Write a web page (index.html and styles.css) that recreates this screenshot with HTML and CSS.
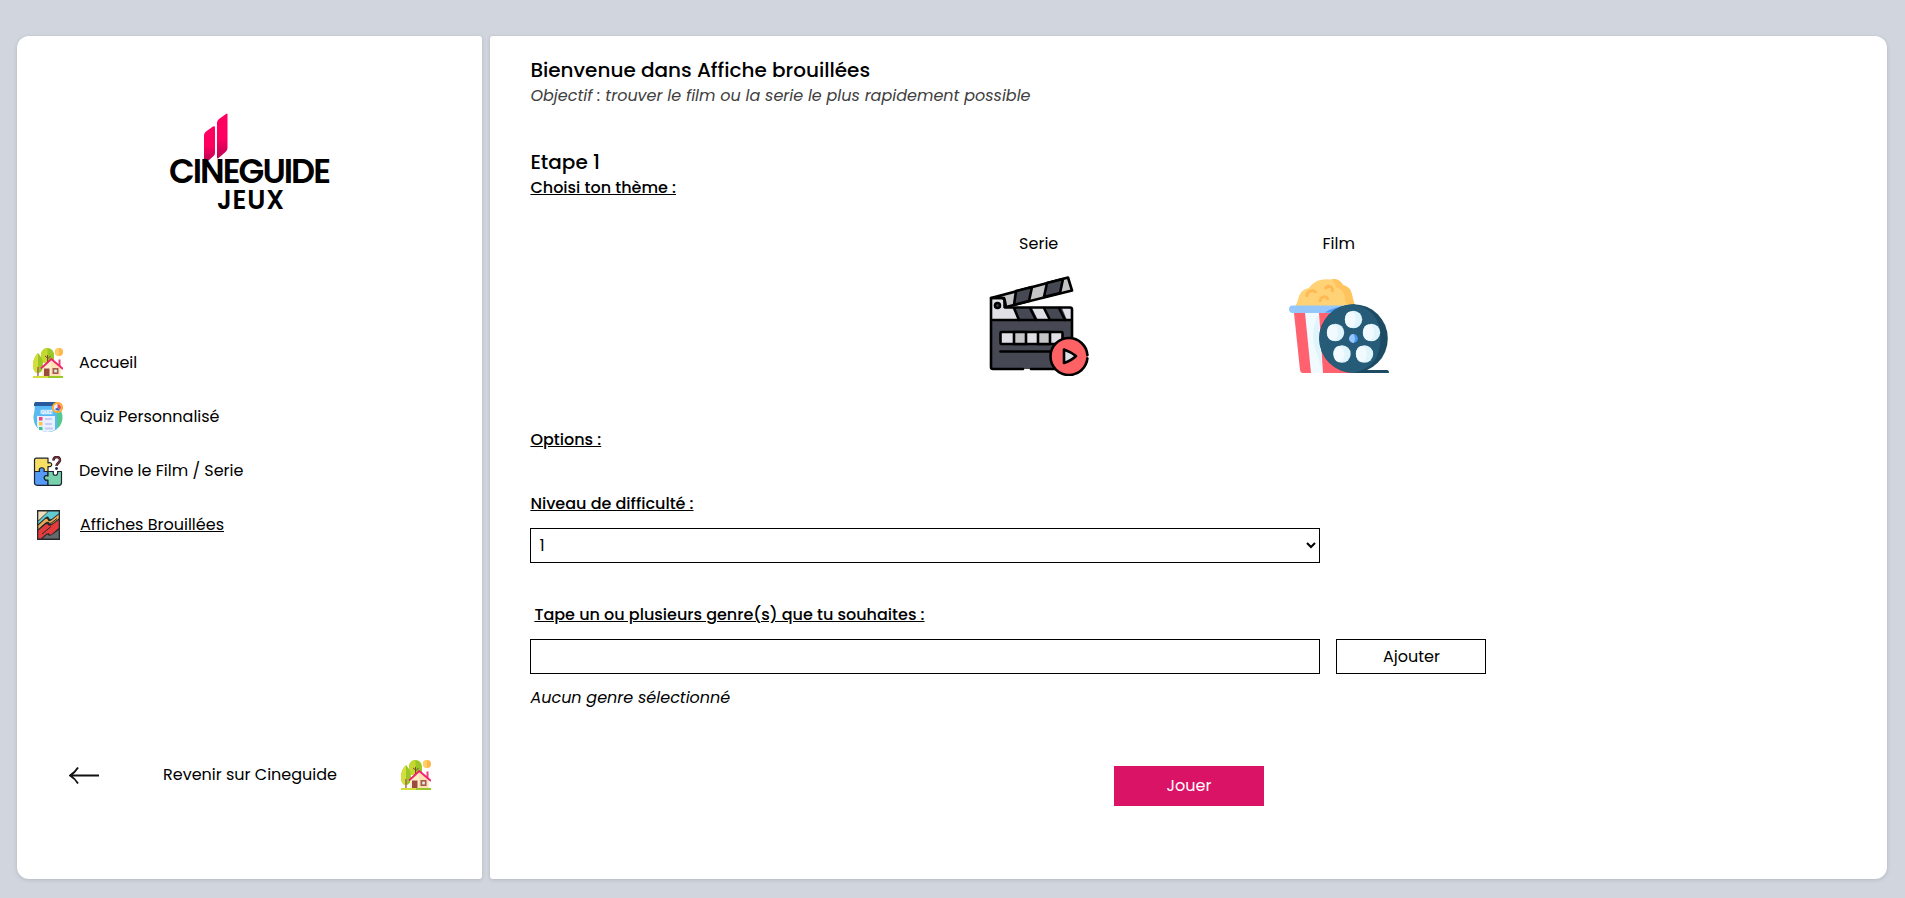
FILE: index.html
```html
<!DOCTYPE html>
<html lang="fr">
<head>
<meta charset="utf-8">
<title>Cineguide Jeux</title>
<link rel="stylesheet" href="styles.css">
</head>
<body>
<svg class="defs" width="0" height="0" aria-hidden="true">
  <symbol id="house" viewBox="0 0 30 30">
    <circle cx="26" cy="4" r="4" fill="#ffb64c"/><path d="M22 4a4 4 0 0 1 4-4v8a4 4 0 0 1-4-4z" fill="#ffd064"/>
    <path d="M8 7C8 3 11 0 14.500 0S21 3 21 7v8H8z" fill="#9bc627"/><path d="M8 7C8 3 11 0 14.500 0v15H8z" fill="#c4d82e"/>
    <path d="M14.500 14V7M14.500 11l3-3M14.500 10l-2.500-2" stroke="#7d4a35" stroke-width="1" fill="none"/>
    <path d="M5 5C2 8 0 12 0 17s2 8 5 8 5-3 5-8S8 8 5 5z" fill="#9bc627"/><path d="M5 5C2 8 0 12 0 17s2 8 5 8z" fill="#d4de3a"/>
    <path d="M4.200 19h1.500v10H4.200z" fill="#a5694f"/>
    <path d="M9 29V19l9-8 9.500 8v10z" fill="#ffeec9"/><path d="M18 11l9.500 8v10H18z" fill="#ffe0b4"/>
    <path d="M25.500 11.500h2v7l-2-2z" fill="#f23f77"/>
    <path d="M8 20.500L18.300 11 30 21" fill="none" stroke="#f2206d" stroke-width="1.800"/>
    <path d="M11 20.500h5.500V29H11z" fill="#9a4b3e"/><rect x="19.500" y="20" width="6" height="6" fill="#a65a48"/><rect x="21.200" y="21.600" width="2.700" height="2.800" fill="#d6edf1"/>
    <path d="M0 28h30v2H0z" fill="#9bc627"/><path d="M0 28h15v2H0z" fill="#d4de3a"/>
  </symbol>
</svg>
<div class="app">
  <aside class="sidebar">
    <svg class="logo" viewBox="0 0 170 120" role="img" aria-label="Cineguide Jeux">
      <defs><linearGradient id="pink" x1="0" y1="0" x2="0" y2="1"><stop offset=".55" stop-color="#ff0060"/><stop offset="1" stop-color="#b90352"/></linearGradient></defs>
      <path d="M38 25q0-2 2-3.500l7-5q2-1 2 1V43q0 2-2 3.500l-5 4.500q-1.500 1-3 0-1-.5-1-2z" fill="url(#pink)"/>
      <path d="M51 12.500q0-2 2-3.500l7-5q1.500-1 1.500.5V38q0 2.500-2 4l-7 6q-1.500 1.500-1.500-1z" fill="url(#pink)"/>
      <text class="logo-name" x="3" y="73" textLength="162" lengthAdjust="spacing">CINEGUIDE</text>
      <text class="logo-sub" x="51" y="99" textLength="67" lengthAdjust="spacing">JEUX</text>
    </svg>
    <nav class="menu">
      <a class="item"><svg class="ico"><use href="#house"/></svg><span>Accueil</span></a>
      <a class="item shifted"><svg class="ico" viewBox="0 0 30 30">
        <circle cx="15" cy="15.500" r="14.500" fill="#54c98f"/><path d="M2 0h22v27q-9 6-18 0-5-4-5-10z" fill="#58b9f4"/><path d="M2 0h22v4H1V2z" fill="#265a9b"/>
        <rect x="7" y="7.500" width="13" height="5" rx="1" fill="#8fcff9"/><text class="quiz" x="8" y="12" textLength="11">QUIZ</text>
        <path d="M4 14h18v14q-8 4-15 0-3-2-3-5z" fill="#eaf0ff"/><path d="M12 17h7M12 22h7M12 26.500h8" stroke="#c4cdf5" stroke-width="1.800"/>
        <rect x="6" y="15" width="3.500" height="3.500" fill="#e8467b"/><rect x="6" y="20" width="3.500" height="3.500" fill="#f6ca43"/><rect x="6" y="25" width="3.500" height="3" fill="#3abf92"/>
        <circle cx="24.500" cy="5.500" r="4.600" fill="#e7efff" stroke="#ffac35" stroke-width="2"/><path d="M24.500 5.500V2a3.500 3.500 0 0 1 2.500 6z" fill="#e74a59"/><path d="M24.500 5.500L27 8a3.500 3.500 0 0 1-5-1z" fill="#3f69bd"/>
      </svg><span>Quiz Personnalisé</span></a>
      <a class="item"><svg class="ico" viewBox="0 0 30 30" fill="none" stroke="#1d2230" stroke-width="1.200" stroke-linejoin="round">
        <path d="M1.500 15.500V4q0-1.800 1.800-1.800H15V7c5-2 5 5 0 3.500v5z" fill="#f6df62"/>
        <path d="M1.500 15.500h5c-2-5 6.500-5 4.500 0h4V20c-5-2-5 5.500 0 4v5.300H4q-2.500 0-2.500-2.500z" fill="#559af5"/>
        <path d="M15 15.500h5.500c-2 5 5.500 5 4 0H28.500v11q0 2.800-2.500 2.800H15V24c-5 1.500-5-6 0-4z" fill="#78d0ac"/>
        <path d="M20.500 4.500C20.500 0 27 0 27 4c0 3-3.500 3-3.500 6" stroke="#33161f" stroke-width="2.500"/><path d="M20.500 4.500C20.500 0 27 0 27 4c0 3-3.500 3-3.500 6" stroke="#b54a5d" stroke-width=".8"/><circle cx="23.500" cy="12.500" r=".8" fill="#33161f"/>
      </svg><span>Devine le Film / Serie</span></a>
      <a class="item shifted"><svg class="ico" viewBox="0 0 30 30">
        <path d="M4 0h23v30H4z" fill="#26272b"/>
        <path d="M5.300 1.500h9.500l-9.500 9z" fill="#f1ddb9"/>
        <path d="M15.500 1.500h10.200v2L20 8q-3 2.500-4 0t-3.500-.5L5.300 14v-2.500z" fill="#62cbd2"/>
        <path d="M5.300 15.500l7-6.500q2-1 2.500 1t3.500.5L25.700 4.500v4L20 13q-3 2-4 0t-4 0l-6.700 6z" fill="#e7aa54"/>
        <path d="M5.300 20.500l7.200-6q2-1 2.500.5t4 0L25.700 10v8L19 24q-2 1.500-2.500 0t-3.500 0l-5 4.500H5.300z" fill="#e43c3c"/>
        <path d="M25.700 20v8.500H9.500l4-3.500q1.500-1 2 .3t4-.8z" fill="#66696b"/>
        <path d="M8 17.500l6-5q2-1 2 .5t3-.5l5-4M9 24l9-7.500" fill="none" stroke="#26272b" stroke-width="1"/>
      </svg><span class="active">Affiches Brouillées</span></a>
    </nav>
    <a class="back">
      <svg class="ico" viewBox="0 0 30 30" fill="none" stroke="#111" stroke-width="1.900"><path d="M1 15.500h29M9 7.500q-3 5-8 8 5 3 8 8"/></svg>
      <span>Revenir sur Cineguide</span>
      <svg class="ico"><use href="#house"/></svg>
    </a>
  </aside>
  <main class="content">
    <h1 class="title">Bienvenue dans Affiche brouillées</h1>
    <p class="goal">Objectif : trouver le film ou la serie le plus rapidement possible</p>
    <h2 class="title step">Etape 1</h2>
    <p class="label theme">Choisi ton thème :</p>
    <div class="choices">
      <div class="choice"><span>Serie</span>
        <svg class="pic" viewBox="0 0 100 100" stroke="#000" stroke-width="2.600" stroke-linejoin="round" stroke-linecap="round">
          <path d="M2 22h13v9H83v62H2z" fill="#464853" stroke="none"/>
          <path d="M2 22h12v10h10l6 12H2z" fill="#e0dfe6" stroke="none"/>
          <path d="M43 32h12l6 12H49zM73 32h10v12h-5z" fill="#e0dfe6" stroke="none"/>
          <path d="M2 22L79 1.500l4 13L17 31l-2-9z" fill="#c5c5c7"/>
          <path d="M27 15l16-4-3 14-15 4zM58 7l16-4-3 14-16 4z" fill="#464853"/>
          <path d="M25 32l5 12M41 32l6 12M55 32l6 12M70 32l6 12" fill="none"/>
          <path d="M2 44h81M34 93H4q-2 0-2-2V22h10q4 0 4 4v5.500h65q2 0 2 2V64M42 93h30" fill="none"/>
          <circle cx="8.500" cy="29.500" r="2.500" fill="#464853"/>
          <rect x="11.500" y="56" width="62" height="12" rx="1" fill="#e0dfe6"/>
          <path d="M25 56h12v12H25zM49 56h12v12H49z" fill="#c5c5c7"/><path d="M11.500 75.500H64" fill="none"/>
          <circle cx="80" cy="80.500" r="18.500" fill="#ff6264" stroke-dasharray="112 4.200" stroke-dashoffset="-2"/>
          <path d="M75 73.500v13.500q7-2 12-7-5-4-12-6.500z" fill="#e0dfe6"/>
        </svg>
      </div>
      <div class="choice"><span>Film</span>
        <svg class="pic" viewBox="0 0 100 100">
          <path d="M6 31c2-4 3-7 4-11q3-7 10-8 4-6 11-8 5-1 10-.5 8-2 12 5 8 2 10 10l1 5q1 5 4 9z" fill="#ffd275"/><path d="M43 3.500q8-1 11 5.500 8 2 9 10l3 11h-6q-5-4-4-9-2-8-9-10-1-5-4-7.500z" fill="#ffc45e"/>
          <path d="M18 23c-1-7 8-8 9-4M36 15c3-5 9-2 7 3M31 28c0-6 7-7 8-2" transform="translate(0 -2)" fill="none" stroke="#ffb954" stroke-width="3"/>
          <path d="M5 37h66l-7 60H14q-2.500 0-3-3z" fill="#ff616e"/><path d="M16 37h14l4 60H22z" fill="#f0faff"/>
          <path d="M28.500 40q-9 20 .5 40l4 15-4-55z" fill="#dff4fb"/>
          <rect y="29.500" width="66" height="7.500" rx="3.700" fill="#96c7fb"/><path d="M36 36.500q8-6 28-7l-10 7z" fill="#4a98f5"/>
          <g transform="translate(0 2.500)">
          <path d="M70 91.500h28q2 0 2 3H64z" fill="#1c4b63"/>
          <circle cx="64.500" cy="60" r="34.300" fill="#1c4b63"/><path d="M64.500 25.700q27 5 27 34T64.500 94.300a34.300 34.300 0 0 1 0-68.600z" fill="#275c79"/>
          <g fill="#dff4fb"><circle cx="64.500" cy="41" r="8.700"/><circle cx="46.500" cy="54" r="8.700"/><circle cx="82.500" cy="54" r="8.700"/><circle cx="53" cy="75.500" r="8.700"/><circle cx="75.500" cy="75.500" r="8.700"/></g>
          <g fill="#f0faff"><ellipse cx="61.500" cy="41" rx="5.500" ry="8"/><ellipse cx="43.500" cy="54" rx="5.500" ry="8"/><ellipse cx="79.500" cy="54" rx="5.500" ry="8"/><ellipse cx="50" cy="75.500" rx="5.500" ry="8"/><ellipse cx="72.500" cy="75.500" rx="5.500" ry="8"/></g>
          <circle cx="64.500" cy="60" r="4.400" fill="#4a98f5"/><path d="M64.500 55.600a4.400 4.400 0 0 0 0 8.800q3-4 0-8.800z" fill="#96c7fb"/>
          </g>
        </svg>
      </div>
    </div>
    <p class="label">Options :</p>
    <label class="label level" for="level">Niveau de difficulté :</label>
    <select class="field" id="level"><option>1</option></select>
    <label class="label genre" for="genre">Tape un ou plusieurs genre(s) que tu souhaites :</label>
    <div class="row"><input class="field" id="genre" type="text"><button class="add" type="button">Ajouter</button></div>
    <p class="none">Aucun genre sélectionné</p>
    <button class="play" type="button">Jouer</button>
  </main>
</div>
</body>
</html>
```
FILE: styles.css
```css
* { box-sizing: border-box; }
body { margin: 0; height: 898px; overflow: hidden; background: #d1d5de; color: #000; font: 16px/24px Poppins, Inter, sans-serif; }
h1, h2, p { margin: 0; }
.defs { display: block; width: 0; height: 0; }
.app { display: flex; gap: 8px; padding: 36px 18px 19px 17px; height: 898px; }
.sidebar, .content { background: #fff; display: flex; flex-direction: column; box-shadow: 0 1px 4px rgba(0, 0, 0, .14); }
.sidebar { width: 465px; flex: none; border-radius: 12px 3px 3px 12px; }
.content { flex: 1; padding: 22px 0 0 40.4px; border-radius: 3px 12px 12px 3px; align-items: flex-start; }
.logo { width: 170px; height: 120px; margin: 74px 0 0 149px; overflow: visible; }
.logo-name { font: 600 33.5px Poppins, Lato, sans-serif; }
.logo-sub { font: 600 26px Poppins, Lato, sans-serif; }
.menu { display: flex; flex-direction: column; gap: 24px; margin: 118px 0 0 16px; }
.item { display: flex; align-items: center; gap: 16px; height: 30px; }
.shifted { gap: 17px; }
.ico { width: 30px; height: 30px; flex: none; }
.quiz { font: 700 4.500px Inter, sans-serif; fill: #fff; }
.active { text-decoration: underline; }
.back { display: flex; justify-content: space-between; align-items: center; margin: 220px 51px 0 52px; height: 30px; }
.title { font-size: 20px; font-weight: 500; line-height: 24px; }
.goal { margin-top: 2px; color: #404040; font-style: italic; }
.step { margin-top: 42px; }
.theme { margin-top: 2px; }
.label { font-weight: 500; text-decoration: underline; }
.choices { display: flex; align-self: stretch; justify-content: center; margin: 32px 40px 52px 0; }
.choice { width: 300px; display: flex; flex-direction: column; align-items: center; gap: 20px; }
.pic { width: 100px; height: 100px; }
.level { margin-top: 40px; }
.field { width: 790px; height: 35px; border: 1px solid #000; border-radius: 0; background: #fff; font: inherit; color: #000; padding: 0 4px; outline: 0; }
select.field { margin-top: 12px; }
.genre { margin: 40px 0 0 4px; }
.row { display: flex; gap: 16px; margin-top: 12px; }
.add { width: 150px; height: 35px; padding: 0; border: 1px solid #000; background: #fff; font: inherit; color: #000; }
.none { margin-top: 12px; font-style: italic; }
.play { width: 150px; height: 40px; margin: 56px 0 0 583.6px; padding: 0; border: 0; background: #db1367; color: #fff; font: inherit; }
```
